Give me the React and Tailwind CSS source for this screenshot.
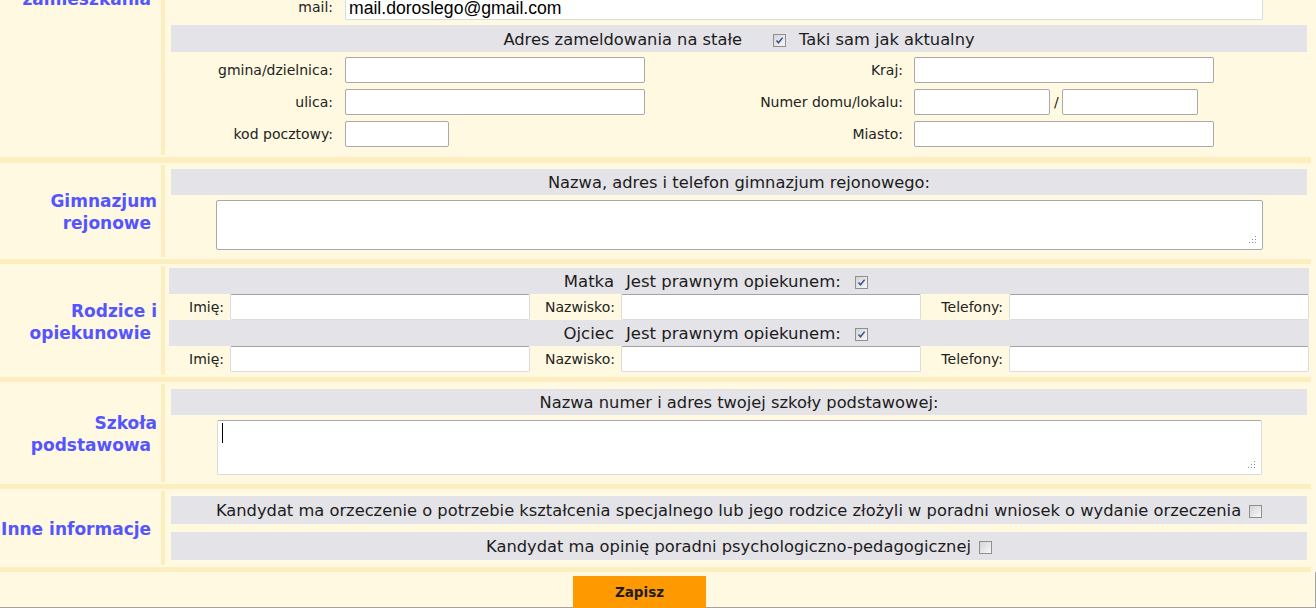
import React from "react";

const Check = ({ checked }) => (
  <span className="inline-flex items-center justify-center w-[13px] h-[13px] shrink-0 border border-[#8f8f8f] bg-linear-to-br from-[#d4d4d4] to-[#f8f8f8] align-middle">
    {checked && (
      <svg width="9" height="9" viewBox="0 0 9 9">
        <path d="M1.5 4.5 L3.5 6.8 L7.6 1.6" stroke="#3a4f95" strokeWidth="1.5" fill="none" />
      </svg>
    )}
  </span>
);

const Grip = () => (
  <svg width="9" height="9" viewBox="0 0 9 9" className="absolute right-[5px] bottom-[5px]">
    <rect x="7" y="1" width="1" height="1" fill="#8a8a8a" />
    <rect x="4" y="4" width="1" height="1" fill="#8a8a8a" />
    <rect x="7" y="4" width="1" height="1" fill="#8a8a8a" />
    <rect x="1" y="7" width="1" height="1" fill="#8a8a8a" />
    <rect x="4" y="7" width="1" height="1" fill="#8a8a8a" />
    <rect x="7" y="7" width="1" height="1" fill="#8a8a8a" />
  </svg>
);

const Bar = ({ h = "h-[5px]" }) => <div className={`${h} w-[1311px] bg-[#fdeec0]`} />;

const Field = ({ w = "w-[300px]" }) => (
  <input
    readOnly
    className={`${w} h-[26px] bg-white border border-[#a9a9a9] rounded-[2px] outline-none px-[3px] text-[14px]`}
  />
);

const PField = () => (
  <input
    readOnly
    className="w-full h-[26px] bg-white border border-[#dcdcdc] border-t-[#a3a3a3] rounded-[2px] outline-none"
  />
);

const Gray = ({ h = "h-[27px]", children, extra = "" }) => (
  <div className={`${h} bg-[#e4e3e8] flex items-center justify-center pt-[3px] text-[16.3px] text-[#1c1c1c] ${extra}`}>
    {children}
  </div>
);

const Section = ({ title, children, contentClass }) => (
  <div className="flex w-[1311px]">
    <div className="w-[161px] shrink-0 flex flex-col items-end justify-center pr-[4px] pt-[2px] text-right font-bold text-[17px] leading-[22px] text-[#5555ff]">
      {title.map((l, i) => (
        <div key={i} className="whitespace-pre">
          {i === title.length - 1 ? l + "\u00a0" : l}
        </div>
      ))}
    </div>
    <div className="w-[4px] shrink-0 my-[2px] bg-[#fdeec0]" />
    <div className={`flex-1 ${contentClass}`}>{children}</div>
  </div>
);

const AddrGrid = () => (
  <div className="grid grid-cols-[174px_306px_263px_1fr] gap-y-[6px] items-center pt-[5px] text-[14px] text-[#222]">
    <div className="text-right pr-[12px] pt-[1px]">gmina/dzielnica:</div>
    <div><Field /></div>
    <div className="text-right pr-[11px] pt-[1px]">Kraj:</div>
    <div><Field /></div>

    <div className="text-right pr-[12px] pt-[1px]">ulica:</div>
    <div><Field /></div>
    <div className="text-right pr-[11px] pt-[1px]">Numer domu/lokalu:</div>
    <div className="flex items-center">
      <Field w="w-[136px]" />
      <span className="ml-[4px] mr-[3px]">/</span>
      <Field w="w-[136px]" />
    </div>

    <div className="text-right pr-[12px] pt-[1px]">kod pocztowy:</div>
    <div><Field w="w-[104px]" /></div>
    <div className="text-right pr-[11px] pt-[1px]">Miasto:</div>
    <div><Field /></div>
  </div>
);

const ParentBlock = ({ who }) => (
  <>
    <div className="h-[26px] bg-[#e4e3e8] flex items-center pt-[3px] text-[16.5px] text-[#1c1c1c]">
      <div className="w-[452px] text-right pr-[7px]">{who}</div>
      <div className="pl-[5px]">Jest prawnym opiekunem:</div>
      <span className="ml-[14px] flex"><Check checked /></span>
    </div>
    <div className="grid grid-cols-[61px_300px_91px_300px_88px_300px] h-[26px] items-center text-[14px] text-[#222]">
      <div className="text-right pr-[6px] pt-[1px]">Imię:</div>
      <PField />
      <div className="text-right pr-[6px] pt-[1px]">Nazwisko:</div>
      <PField />
      <div className="text-right pr-[6px] pt-[1px]">Telefony:</div>
      <PField />
    </div>
  </>
);

export default function App() {
  return (
    <div className="h-[608px] overflow-hidden bg-[#fff9e1] font-['DejaVu_Sans',sans-serif]">
      <div className="-mt-[183px]">
        {/* Adres zamieszkania */}
        <Section title={["Adres", "zamieszkania"]} contentClass="pl-[6px] pr-[4px] pt-[7px] pb-[10px]">
          <Gray>Adres zamieszkania</Gray>
          <AddrGrid />
          <div className="grid grid-cols-[174px_1fr] items-center mt-[10px] text-[14px] text-[#222]">
            <div className="text-right pr-[12px]">telefon:</div>
            <input readOnly className="w-[918px] h-[26px] bg-white border border-[#d6dce4] rounded-[2px] outline-none" />
          </div>
          <div className="grid grid-cols-[174px_1fr] items-center mt-[12px] text-[14px] text-[#222]">
            <div className="text-right pr-[12px]">mail:</div>
            <input
              readOnly
              defaultValue="mail.doroslego@gmail.com"
              className="w-[918px] h-[26px] bg-white border border-[#d6dce4] rounded-[2px] outline-none px-[3px] pt-[2px] text-[17.6px] text-black font-['Liberation_Sans',Arial,sans-serif]"
            />
          </div>
          <Gray extra="mt-[5px]">
            <span>Adres zameldowania na stałe</span>
            <span className="ml-[31px] flex"><Check checked /></span>
            <span className="ml-[13px]">Taki sam jak aktualny</span>
          </Gray>
          <AddrGrid />
        </Section>
        <Bar h="h-[6px]" />

        {/* Gimnazjum */}
        <Section title={["Gimnazjum", "rejonowe"]} contentClass="pl-[6px] pr-[4px] pt-[6px] pb-[9px]">
          <Gray h="h-[26px]">Nazwa, adres i telefon gimnazjum rejonowego:</Gray>
          <div className="relative w-[1047px] h-[50px] mx-auto mt-[5px] bg-white border border-[#a9a9a9] rounded-[2px]">
            <Grip />
          </div>
        </Section>
        <Bar />

        {/* Rodzice */}
        <Section title={["Rodzice i", "opiekunowie"]} contentClass="pl-[4px] pr-[2px] pt-[4px] pb-[5px]">
          <ParentBlock who="Matka" />
          <ParentBlock who="Ojciec" />
        </Section>
        <Bar />

        {/* Szkoła */}
        <Section title={["Szkoła", "podstawowa"]} contentClass="pl-[6px] pr-[4px] pt-[7px] pb-[9px]">
          <Gray h="h-[26px]">Nazwa numer i adres twojej szkoły podstawowej:</Gray>
          <div className="relative w-[1045px] h-[55px] ml-[46px] mt-[5px] bg-white border border-[#dadada] border-t-[#a9a9a9] rounded-[2px]">
            <div className="absolute left-[4px] top-[2px] w-[1px] h-[20px] bg-black" />
            <Grip />
          </div>
        </Section>
        <Bar />

        {/* Inne */}
        <Section title={["Inne informacje"]} contentClass="pl-[6px] pr-[4px] pt-[7px] pb-[7px]">
          <Gray h="h-[28px]">
            <span>Kandydat ma orzeczenie o potrzebie kształcenia specjalnego lub jego rodzice złożyli w poradni wniosek o wydanie orzeczenia</span>
            <span className="ml-[8px] flex"><Check /></span>
          </Gray>
          <Gray h="h-[28px]" extra="mt-[8px]">
            <span>Kandydat ma opinię poradni psychologiczno-pedagogicznej</span>
            <span className="ml-[8px] flex"><Check /></span>
          </Gray>
        </Section>
        <Bar />

        <div className="h-[36px] w-[1316px] border-b border-r border-[#a3a3a3] flex items-start">
          <button className="ml-[573px] mt-[4px] w-[133px] h-[32px] bg-[#ff9900] font-bold text-[13.5px] text-[#1c1c1c]">
            Zapisz
          </button>
        </div>
      </div>
    </div>
  );
}
